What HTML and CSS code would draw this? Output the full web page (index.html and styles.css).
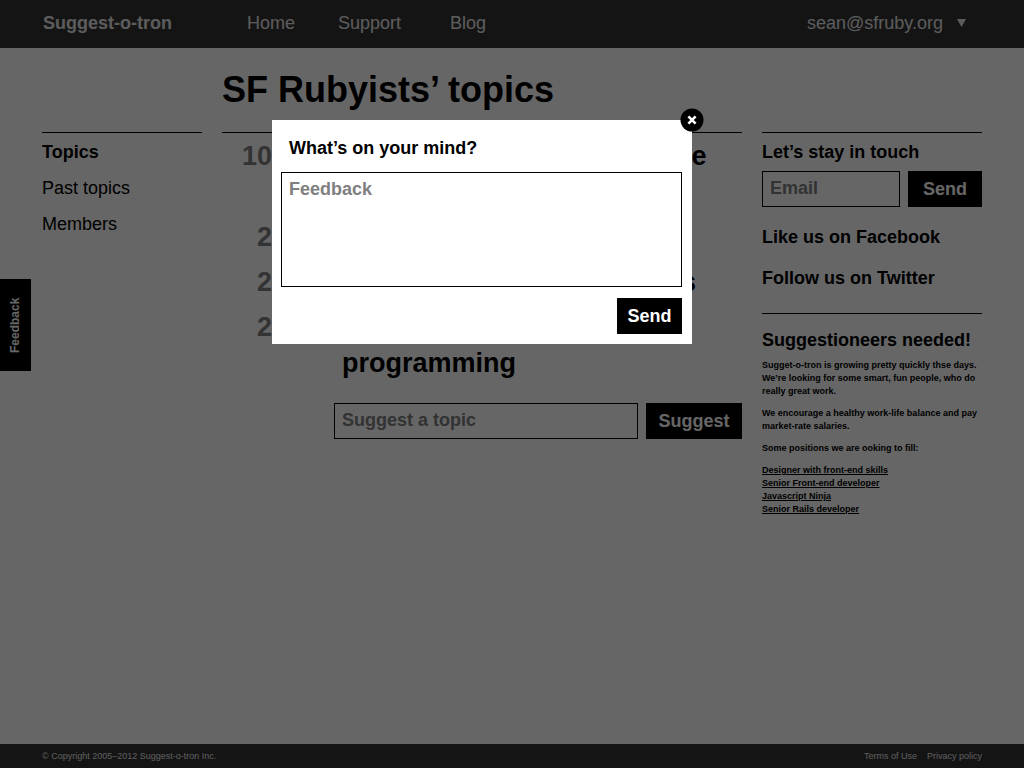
FILE: index.html
```html
<!DOCTYPE html>
<html lang="en">
<head>
<meta charset="utf-8">
<title>Suggest-o-tron</title>
<link rel="stylesheet" href="styles.css">
</head>
<body>
<div class="page">
  <header class="site-header">
    <a class="brand" href="#">Suggest-o-tron</a>
    <nav class="site-nav">
      <a href="#">Home</a>
      <a href="#">Support</a>
      <a href="#">Blog</a>
    </nav>
    <button class="account" type="button">sean@sfruby.org
      <svg class="caret" viewBox="0 0 8 7" aria-hidden="true"><path d="M0 0h8L4 7z"/></svg>
    </button>
  </header>

  <div class="columns title-row">
    <h1 class="title">SF Rubyists’ topics</h1>
  </div>

  <div class="columns content">
    <nav class="side-nav">
      <a class="current" href="#">Topics</a>
      <a href="#">Past topics</a>
      <a href="#">Members</a>
    </nav>

    <main class="main">
      <ul class="topics">
        <li class="topic"><span class="votes">10</span><span class="topic-name">How do you like to compose views in Rails?</span></li>
        <li class="topic"><span class="votes">2</span><span class="topic-name">Pairing with strangers</span></li>
        <li class="topic"><span class="votes">2</span><span class="topic-name">Introduction to Rails basics</span></li>
        <li class="topic"><span class="votes">2</span><span class="topic-name">Intro to functional programming</span></li>
      </ul>
      <form class="field-row suggest">
        <input class="field" type="text" placeholder="Suggest a topic" aria-label="Suggest a topic">
        <button class="button wide" type="button">Suggest</button>
      </form>
    </main>

    <aside class="aside">
      <form>
        <label class="aside-label" for="email">Let’s stay in touch</label>
        <div class="field-row">
          <input class="field" id="email" type="email" placeholder="Email">
          <button class="button medium" type="button">Send</button>
        </div>
      </form>
      <div class="social">
        <a href="#">Like us on Facebook</a>
        <a href="#">Follow us on Twitter</a>
      </div>
      <section class="jobs">
        <h2>Suggestioneers needed!</h2>
        <p>Sugget-o-tron is growing pretty quickly thse days. We’re looking for some smart, fun people, who do really great work.</p>
        <p>We encourage a healthy work-life balance and pay market-rate salaries.</p>
        <p>Some positions we are ooking to fill:</p>
        <ul>
          <li><a href="#">Designer with front-end skills</a></li>
          <li><a href="#">Senior Front-end developer</a></li>
          <li><a href="#">Javascript Ninja</a></li>
          <li><a href="#">Senior Rails developer</a></li>
        </ul>
      </section>
    </aside>
  </div>

  <footer class="site-footer">
    <span>© Copyright 2005–2012 Suggest-o-tron Inc.</span>
    <nav class="legal">
      <a href="#">Terms of Use</a>
      <a href="#">Privacy policy</a>
    </nav>
  </footer>
</div>

<button class="feedback-tab" type="button">Feedback</button>

<div class="overlay columns">
  <form class="modal" role="dialog" aria-labelledby="modal-title">
    <button class="close" type="button" aria-label="Close">
      <svg viewBox="0 0 24 24" aria-hidden="true"><circle cx="12" cy="12" r="11.5"/><path d="M8.4 8.4l7.2 7.2M15.6 8.4l-7.2 7.2"/></svg>
    </button>
    <label class="modal-title" id="modal-title" for="feedback">What’s on your mind?</label>
    <textarea class="field area" id="feedback" placeholder="Feedback"></textarea>
    <button class="button" type="button">Send</button>
  </form>
</div>
</body>
</html>
```
FILE: styles.css
```css
* {
  box-sizing: border-box;
}

body {
  margin: 0;
  background: #fff;
  color: #000;
  font: 18px/22px "Liberation Sans", Arial, sans-serif;
}

a {
  color: inherit;
  text-decoration: none;
}

button,
input,
textarea {
  font: inherit;
  border-radius: 0;
}

ul {
  margin: 0;
  padding: 0;
  list-style: none;
}

.page {
  display: flex;
  flex-direction: column;
  min-height: 100vh;
}

.columns {
  display: grid;
  grid-template-columns: 160px minmax(0, 1fr) 220px;
  column-gap: 20px;
  padding: 0 42px;
}

/* Header */
.site-header {
  display: flex;
  align-items: center;
  height: 48px;
  padding: 0 58px 2px 43px;
  background: #333;
  color: #e6e6e6;
}

.brand {
  width: 204px;
  font-weight: bold;
}

.site-nav {
  display: grid;
  flex: 1;
  grid-template-columns: 91px 112px auto;
}

.account {
  display: flex;
  align-items: center;
  gap: 14px;
  padding: 0;
  border: 0;
  background: none;
  color: inherit;
}

.caret {
  width: 9px;
  height: 8px;
  fill: currentColor;
}

/* Title */
.title-row {
  height: 84px;
  align-items: center;
}

.title {
  grid-column: 2;
  margin: 0;
  font-size: 36px;
  line-height: 42px;
}

/* Columns */
.content {
  flex: 1;
  align-items: start;
}

.side-nav,
.main,
.aside {
  border-top: 1px solid #000;
}

.side-nav {
  display: flex;
  flex-direction: column;
  padding-top: 1px;
  line-height: 36px;
}

.current {
  font-weight: bold;
}

.topics {
  display: flex;
  flex-direction: column;
  gap: 9px;
  padding-top: 5px;
  font-size: 27px;
  font-weight: bold;
  line-height: 36px;
}

.topic {
  display: grid;
  grid-template-columns: 50px minmax(0, 1fr);
  column-gap: 70px;
}

.votes {
  color: #808080;
  text-align: right;
}

/* Forms */
.field-row {
  display: flex;
  gap: 8px;
}

.suggest {
  margin: 22px 0 0 112px;
}

.field {
  flex: 1;
  min-width: 0;
  height: 36px;
  padding: 0 7px 2px;
  border: 1px solid #000;
  background: #fff;
  color: #000;
  font-weight: bold;
}

.field::placeholder {
  color: #808080;
  opacity: 1;
}

.button {
  min-width: 65px;
  height: 36px;
  padding: 0 10px;
  border: 0;
  background: #000;
  color: #fff;
  font-weight: bold;
}

.button.medium {
  min-width: 74px;
}

.button.wide {
  min-width: 96px;
}

/* Right column */
.aside {
  font-weight: bold;
}

.aside-label {
  display: block;
  padding-top: 1px;
  line-height: 37px;
}

.social {
  display: flex;
  flex-direction: column;
  gap: 19px;
  padding: 19px 0 24px;
  border-bottom: 1px solid #000;
}

.jobs {
  padding-top: 15px;
  font-size: 9px;
  line-height: 13px;
}

.jobs h2 {
  margin: 0 0 8px;
  font-size: 18px;
  line-height: 22px;
}

.jobs p {
  margin: 0 0 9px;
}

.jobs a {
  text-decoration: underline;
}

/* Footer */
.site-footer {
  display: flex;
  align-items: center;
  justify-content: space-between;
  height: 24px;
  padding: 0 42px;
  background: #333;
  color: #e6e6e6;
  font-size: 9px;
  line-height: 12px;
}

.legal {
  display: flex;
  gap: 10px;
}

/* Feedback tab */
.feedback-tab {
  position: fixed;
  top: 279px;
  left: 0;
  min-height: 92px;
  padding: 18px 8px;
  border: 0;
  background: #000;
  color: #fff;
  font-size: 12px;
  font-weight: bold;
  line-height: 15px;
  writing-mode: vertical-rl;
  transform: rotate(180deg);
}

/* Dialog */
.overlay {
  position: fixed;
  inset: 0;
  align-items: start;
  padding-top: 120px;
  background: rgba(0, 0, 0, 0.6);
}

.modal {
  position: relative;
  grid-column: 2;
  justify-self: center;
  display: flex;
  flex-direction: column;
  width: 100%;
  max-width: 420px;
  padding: 16px 10px 10px 9px;
  background: #fff;
}

.modal-title {
  padding: 0 8px;
  font-weight: bold;
  line-height: 24px;
}

.area {
  flex: none;
  height: 115px;
  margin: 12px 0 11px;
  padding: 5px 7px;
  resize: none;
}

.modal .button {
  align-self: flex-end;
}

.close {
  position: absolute;
  top: -12px;
  right: -12px;
  width: 24px;
  height: 24px;
  padding: 0;
  border: 0;
  background: none;
}

.close svg {
  display: block;
}

.close path {
  fill: none;
  stroke: #fff;
  stroke-width: 2.6;
}
```
